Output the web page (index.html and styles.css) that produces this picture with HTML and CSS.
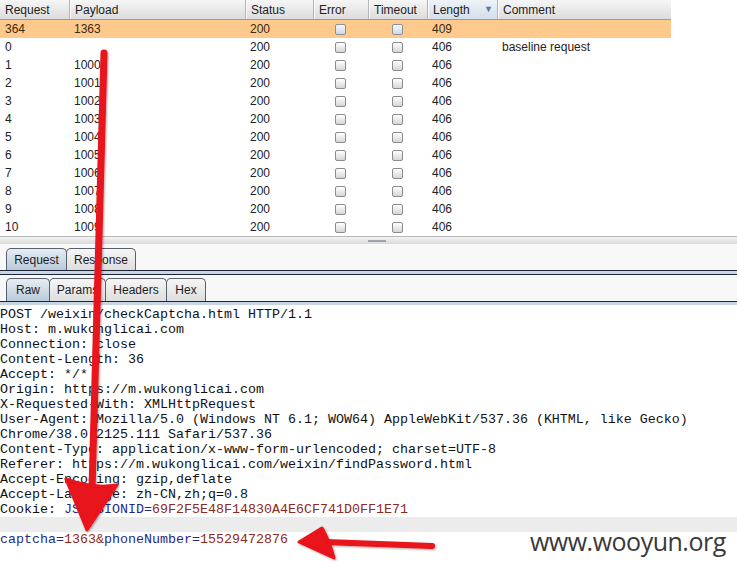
FILE: index.html
```html
<!DOCTYPE html>
<html>
<head>
<meta charset="utf-8">
<link rel="stylesheet" href="styles.css">
</head>
<body>
<div class="page">
  <div class="results">
    <div class="grid head">
      <div class="hc">Request</div>
      <div class="hc">Payload</div>
      <div class="hc">Status</div>
      <div class="hc">Error</div>
      <div class="hc">Timeout</div>
      <div class="hc sorted">Length<span class="sortarrow">▼</span></div>
      <div class="hc">Comment</div>
    </div>
    <div class="grid row sel"><div>364</div><div>1363</div><div>200</div><div class="cb"><span class="box"></span></div><div class="cb"><span class="box"></span></div><div>409</div><div></div></div>
    <div class="grid row"><div>0</div><div></div><div>200</div><div class="cb"><span class="box"></span></div><div class="cb"><span class="box"></span></div><div>406</div><div>baseline request</div></div>
    <div class="grid row"><div>1</div><div>1000</div><div>200</div><div class="cb"><span class="box"></span></div><div class="cb"><span class="box"></span></div><div>406</div><div></div></div>
    <div class="grid row"><div>2</div><div>1001</div><div>200</div><div class="cb"><span class="box"></span></div><div class="cb"><span class="box"></span></div><div>406</div><div></div></div>
    <div class="grid row"><div>3</div><div>1002</div><div>200</div><div class="cb"><span class="box"></span></div><div class="cb"><span class="box"></span></div><div>406</div><div></div></div>
    <div class="grid row"><div>4</div><div>1003</div><div>200</div><div class="cb"><span class="box"></span></div><div class="cb"><span class="box"></span></div><div>406</div><div></div></div>
    <div class="grid row"><div>5</div><div>1004</div><div>200</div><div class="cb"><span class="box"></span></div><div class="cb"><span class="box"></span></div><div>406</div><div></div></div>
    <div class="grid row"><div>6</div><div>1005</div><div>200</div><div class="cb"><span class="box"></span></div><div class="cb"><span class="box"></span></div><div>406</div><div></div></div>
    <div class="grid row"><div>7</div><div>1006</div><div>200</div><div class="cb"><span class="box"></span></div><div class="cb"><span class="box"></span></div><div>406</div><div></div></div>
    <div class="grid row"><div>8</div><div>1007</div><div>200</div><div class="cb"><span class="box"></span></div><div class="cb"><span class="box"></span></div><div>406</div><div></div></div>
    <div class="grid row"><div>9</div><div>1008</div><div>200</div><div class="cb"><span class="box"></span></div><div class="cb"><span class="box"></span></div><div>406</div><div></div></div>
    <div class="grid row"><div>10</div><div>1009</div><div>200</div><div class="cb"><span class="box"></span></div><div class="cb"><span class="box"></span></div><div>406</div><div></div></div>
  </div>
  <div class="splitter"><span class="handle"></span></div>
  <div class="tabzone">
    <div class="tabs t1">
      <div class="tab active w-request">Request</div>
      <div class="tab w-response">Response</div>
    </div>
    <div class="bar full"></div>
    <div class="tabs t2">
      <div class="tab active w-raw">Raw</div>
      <div class="tab w-params">Params</div>
      <div class="tab w-headers">Headers</div>
      <div class="tab w-hex">Hex</div>
    </div>
    <div class="bar"></div>
  </div>
  <div class="editor">
<div class="ln">POST /weixin/checkCaptcha.html HTTP/1.1</div>
<div class="ln">Host: m.wukonglicai.com</div>
<div class="ln">Connection: close</div>
<div class="ln">Content-Length: 36</div>
<div class="ln">Accept: */*</div>
<div class="ln">Origin: https://m.wukonglicai.com</div>
<div class="ln">X-Requested-With: XMLHttpRequest</div>
<div class="ln">User-Agent: Mozilla/5.0 (Windows NT 6.1; WOW64) AppleWebKit/537.36 (KHTML, like Gecko)</div>
<div class="ln">Chrome/38.0.2125.111 Safari/537.36</div>
<div class="ln">Content-Type: application/x-www-form-urlencoded; charset=UTF-8</div>
<div class="ln">Referer: https://m.wukonglicai.com/weixin/findPassword.html</div>
<div class="ln">Accept-Encoding: gzip,deflate</div>
<div class="ln">Accept-Language: zh-CN,zh;q=0.8</div>
<div class="ln">Cookie: <span class="k">JSESSIONID=</span><span class="v">69F2F5E48F14830A4E6CF741D0FF1E71</span></div>
<div class="ln caret">&nbsp;</div>
<div class="ln"><span class="k">captcha=</span><span class="v">1363&amp;</span><span class="k">phoneNumber=</span><span class="v">15529472876</span></div>
  </div>
  <div class="watermark">www.wooyun.org</div>
  <svg class="arrows" width="737" height="571" viewBox="0 0 737 571">
    <defs>
      <filter id="sh" x="-20%" y="-20%" width="140%" height="140%">
        <feDropShadow dx="1" dy="1" stdDeviation="1.2" flood-color="#000" flood-opacity="0.35"/>
      </filter>
    </defs>
    <g filter="url(#sh)" fill="#e8121a" stroke="#e8121a" stroke-linejoin="round" stroke-linecap="round">
      <path d="M104 53 L92 490" stroke-width="7" fill="none"/>
      <path d="M66 479 Q92 489 117 485 L87 530 Z" stroke-width="3"/>
      <path d="M432 546 L325 542" stroke-width="6" fill="none"/>
      <path d="M322 528 Q330 542 334 558 L299 542 Z" stroke-width="3"/>
    </g>
  </svg>
</div>
</body>
</html>
```
FILE: styles.css
```css
* { box-sizing: border-box; }
html, body { margin: 0; padding: 0; background: #fff; }
.page {
  position: relative;
  width: 737px;
  height: 571px;
  overflow: hidden;
  font-family: "Liberation Sans", Arial, sans-serif;
  font-size: 12px;
  color: #222;
}
.results {
  height: 237px;
  overflow: hidden;
  background: #fff;
  border-bottom: 1px solid #b8b8b8;
}
.grid {
  display: grid;
  grid-template-columns: 69px 176px 68px 55px 59px 70px 174px;
  width: 671px;
}
.head {
  height: 20px;
  background: linear-gradient(#f6f6f6, #dcdcdc);
  border-bottom: 1px solid #9a9a9a;
}
.hc {
  display: flex;
  align-items: center;
  padding-left: 5px;
  border-left: 1px solid #b4b4b4;
  box-shadow: inset 1px 0 0 #fafafa;
  position: relative;
}
.hc:first-child { border-left: none; box-shadow: none; }
.hc.sorted { background: linear-gradient(#eef3f8, #d3dfea); }
.sortarrow {
  position: absolute;
  left: 56px;
  top: 4px;
  font-size: 9px;
  color: #5878a0;
}
.row { height: 18px; }
.row > div {
  display: flex;
  align-items: center;
  padding-left: 5px;
  white-space: nowrap;
}
.row > div.cb { justify-content: center; padding-left: 0; }
.row.sel { background: #fec98c; color: #3a2a10; }
.box {
  width: 11px;
  height: 11px;
  border: 1px solid #8c8c8c;
  border-radius: 2px;
  background: linear-gradient(#ffffff, #d6d6d6);
}
.row.sel .box { background: linear-gradient(#f4f8fc, #cfd8e2); border-color: #8a909a; }
.splitter {
  height: 7px;
  background: linear-gradient(#f3f3f3, #d9d9d9);
  position: relative;
  display: flex;
  padding-left: 368px;
  align-items: center;
}
.handle {
  width: 18px;
  height: 2px;
  background: #9ea4ac;
}
.tabzone { background: #f8f8f8; }
.tabs {
  display: flex;
  padding-left: 6px;
}
.t1 { padding-top: 4px; }
.t2 { padding-top: 3px; }
.tab {
  height: 22px;
  display: flex;
  align-items: center;
  justify-content: center;
  border: 1px solid #58606c;
  border-bottom: none;
  border-radius: 5px 5px 0 0;
  background: linear-gradient(#f6f6f6, #dedede);
  margin-right: -1px;
  color: #1e1e1e;
}
.t2 .tab { height: 23px; }
.tab.active { background: linear-gradient(#e6edf4, #b9cad9); }
.w-request { width: 61px; }
.w-response { width: 70px; }
.w-raw { width: 44px; }
.w-params { width: 57px; }
.w-headers { width: 62px; }
.w-hex { width: 40px; }
.bar {
  height: 4px;
  border-top: 1px solid #1c2638;
  background: #c7d6e4;
}
.bar.full { height: 5px; border-bottom: 1px solid #1c2638; }
.editor {
  font-family: "Liberation Mono", "Courier New", monospace;
  font-size: 13.33px;
  line-height: 15px;
  color: #111;
  background: #fff;
  padding-top: 2px;
}
.ln { white-space: pre; height: 15px; }
.ln.caret { background: #ececec; }
.k { color: #1f2a8a; }
.v { color: #8c2a24; }
.watermark {
  position: absolute;
  left: 530px;
  top: 524px;
  font-family: "Open Sans", sans-serif;
  font-size: 25px;
  letter-spacing: -0.5px;
  color: #3a3a3a;
}
.arrows {
  position: absolute;
  left: 0;
  top: 0;
  pointer-events: none;
}
```
